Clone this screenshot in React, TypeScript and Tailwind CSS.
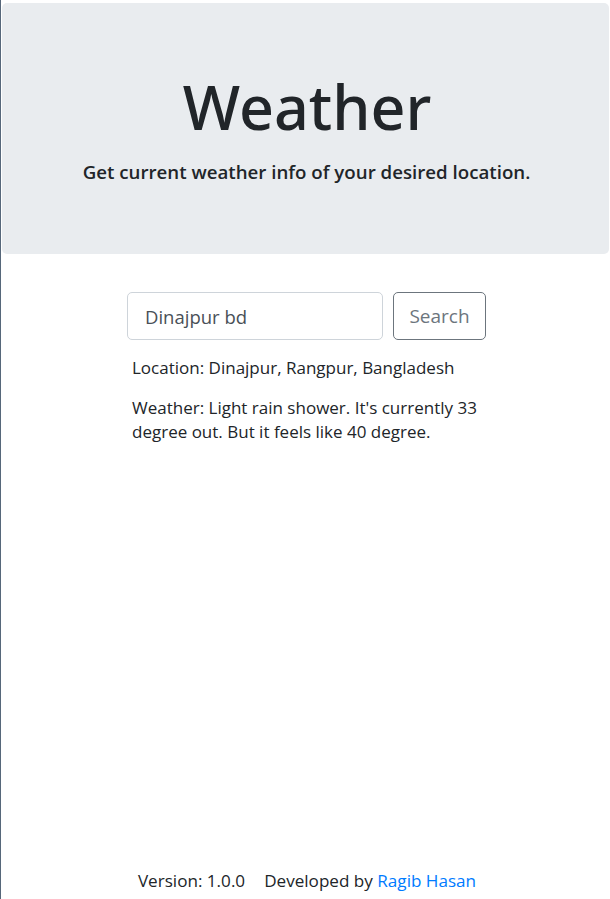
import React from "react";

export default function App() {
  return (
    <div
      className="min-h-screen flex flex-col bg-white border-l border-[#56677a]"
      style={{ fontFamily: '"Open Sans", "Noto Sans", sans-serif' }}
    >
      <div className="mt-[3px] ml-[1px] mr-[1px] h-[251px] rounded-[5px] bg-[#e9ecef] flex flex-col items-center pt-[66px]">
        <h1
          className="text-[61px] leading-[76px] font-medium text-[#212529] pl-[3px]"
          style={{ fontFamily: '"Noto Sans", "Open Sans", sans-serif' }}
        >
          Weather
        </h1>
        <p className="mt-[13px] text-[18.7px] leading-[27px] font-semibold text-[#212529] pl-[2px]">
          Get current weather info of your desired location.
        </p>
      </div>

      <div className="flex flex-col items-center mt-[38px] pl-[2px]">
        <div className="w-[359px]">
          <form className="flex gap-[10px]" onSubmit={(e) => e.preventDefault()}>
            <input
              defaultValue="Dinajpur bd"
              className="w-[256px] h-[48px] px-[17px] rounded-[5px] border border-[#ced4da] text-[18.5px] text-[#495057] bg-white outline-none"
            />
            <button
              type="submit"
              className="w-[93px] h-[48px] rounded-[5px] border border-[#6c757d] text-[19px] text-[#6c757d] bg-white"
            >
              Search
            </button>
          </form>
          <div className="px-[5px] pt-[16px] text-[17px] leading-[24px] text-[#212529]">
            <p>Location: Dinajpur, Rangpur, Bangladesh</p>
            <p className="mt-[16px] w-[360px]">
              Weather: Light rain shower. It's currently 33 degree out. But it feels like 40 degree.
            </p>
          </div>
        </div>
      </div>

      <footer className="mt-auto pb-[6px] pl-[3px] text-center text-[17.1px] leading-[24px] text-[#212529]">
        <span>Version: 1.0.0</span>
        <span className="ml-[19px]">Developed by </span>
        <a href="#" className="text-[#007bff]">Ragib Hasan</a>
      </footer>
    </div>
  );
}
